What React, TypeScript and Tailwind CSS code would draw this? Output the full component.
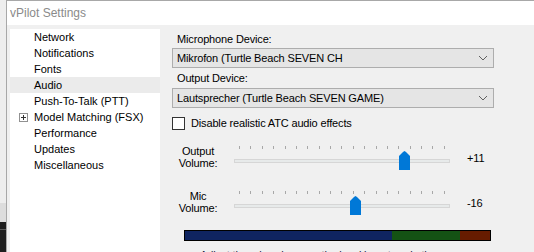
import React from "react";

const treeItems = [
  { label: "Network" },
  { label: "Notifications" },
  { label: "Fonts" },
  { label: "Audio", selected: true },
  { label: "Push-To-Talk (PTT)" },
  { label: "Model Matching (FSX)", expandable: true },
  { label: "Performance" },
  { label: "Updates" },
  { label: "Miscellaneous" },
];

function Chevron() {
  return (
    <svg width="10" height="6" viewBox="0 0 10 6" className="shrink-0">
      <polyline points="1,1 5,5 9,1" fill="none" stroke="#606060" strokeWidth="1" />
    </svg>
  );
}

function Select({ value }: { value: string }) {
  return (
    <div className="h-[20px] w-[322px] shrink-0 bg-[#e5e5e5] border border-[#adadad] flex items-center justify-between pl-[4px] pr-[5px]">
      <span className="truncate">{value}</span>
      <Chevron />
    </div>
  );
}

function Slider({ thumb, label1, label2, value }: { thumb: number; label1: string; label2: string; value: string }) {
  return (
    <div className="flex items-start h-[45px]">
      {/* label */}
      <div className="w-[44px] ml-[4px] mt-[-1px] text-center leading-[12px]">
        <div>{label1}</div>
        <div>{label2}</div>
      </div>
      {/* track area */}
      <div className="relative ml-[14px] w-[216px] h-[24px]">
        <div className="flex justify-between px-[5px]">
          {Array.from({ length: 19 }).map((_, i) => (
            <div key={i} className="w-px h-[3px] bg-[#a8a8a8]" />
          ))}
        </div>
        <div className="mt-[10px] h-[4px] bg-[#e7eaea] border border-[#d6d6d6]" />
        <svg
          width="11"
          height="19"
          viewBox="0 0 11 19"
          className="absolute top-[5px]"
          style={{ left: thumb }}
        >
          <path d="M0 5 L4 1 L5.5 0 L7 1 L11 5 V19 H0 Z" fill="#0078d7" />
        </svg>
      </div>
      <div className="ml-[17px] pt-[4px]">{value}</div>
    </div>
  );
}

export default function App() {
  return (
    <div
      className="w-[534px] h-[252px] overflow-hidden flex text-[11px] text-black"
      style={{ fontFamily: '"Liberation Sans", Arial, sans-serif' }}
    >
      {/* desktop behind the window */}
      <div className="w-[6px] shrink-0 flex flex-col">
        <div className="flex-1 bg-[#eeeeee]" />
        <div className="h-[19px] bg-[#dddddd]" />
        <div className="h-[7px] bg-[#1e1e1e]" />
        <div className="h-px bg-[#5a5a5a]" />
        <div className="h-[22px] bg-[#1e1e1e]" />
      </div>

      {/* window */}
      <div className="flex-1 min-w-0 flex flex-col border-l border-t border-[#a8a8a8] overflow-hidden">
        {/* title bar */}
        <div className="h-[24px] shrink-0 bg-white flex items-center pl-[3px] text-[12px] text-[#8a8a8a]">
          vPilot Settings
        </div>

        <div className="flex-1 min-h-0 bg-[#f0f0f0] flex pt-[4px]">
          {/* tree */}
          <div className="ml-[3px] w-[150px] shrink-0 bg-white">
            {treeItems.map((it) => (
              <div
                key={it.label}
                className={`h-[16px] flex items-center ${it.selected ? "bg-[#ebebeb]" : ""}`}
              >
                <div className="w-[24px] shrink-0 flex justify-end pr-[6px]">
                  {it.expandable && (
                    <div className="w-[9px] h-[9px] border border-[#919191] flex items-center justify-center relative">
                      <div className="absolute w-[5px] h-px bg-[#333]" />
                      <div className="absolute w-px h-[5px] bg-[#333]" />
                    </div>
                  )}
                </div>
                <span className="whitespace-nowrap">{it.label}</span>
              </div>
            ))}
          </div>

          {/* audio panel */}
          <div className="ml-[12px] flex flex-col tracking-[-0.15px]">
            <div className="h-[19px] shrink-0 pl-[5px] pt-[4px] leading-[12px]">Microphone Device:</div>
            <Select value="Mikrofon (Turtle Beach SEVEN CH" />
            <div className="h-[20px] shrink-0 pl-[5px] pt-[4px] leading-[12px]">Output Device:</div>
            <Select value="Lautsprecher (Turtle Beach SEVEN GAME)" />
            <div className="mt-[9px] h-[13px] shrink-0 flex items-center">
              <div className="w-[13px] h-[13px] bg-white border border-[#333333]" />
              <span className="ml-[6px]">Disable realistic ATC audio effects</span>
            </div>
            <div className="mt-[16px] shrink-0">
              <Slider thumb={165} label1="Output" label2="Volume:" value="+11" />
              <Slider thumb={116} label1="Mic" label2="Volume:" value="-16" />
            </div>
            {/* level meter */}
            <div className="ml-[12px] mt-[-6px] w-[307px] h-[11px] shrink-0 border border-black flex">
              <div className="w-[207px] bg-[#0f2460]" />
              <div className="w-[68px] bg-[#145214]" />
              <div className="flex-1 bg-[#661c00]" />
            </div>
            <div className="ml-[28px] mt-[6px] shrink-0 whitespace-nowrap text-[#1a1a40]">
              Adjust the mic volume so the level bar stays in the green.
            </div>
          </div>
        </div>
      </div>
    </div>
  );
}
